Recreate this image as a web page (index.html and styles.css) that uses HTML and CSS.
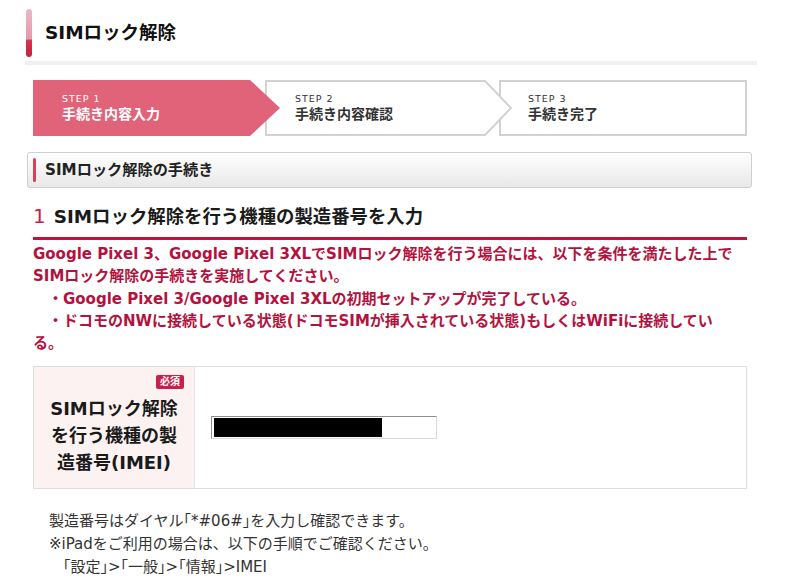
FILE: index.html
```html
<!DOCTYPE html>
<html lang="ja">
<head>
<meta charset="utf-8">
<title>SIMロック解除</title>
<link rel="stylesheet" href="styles.css">
</head>
<body>
<div class="page">
  <header class="hdr">
    <div class="hdr-title"><span class="hdr-bar"></span><h1>SIMロック解除</h1></div>
    <div class="hdr-line"></div>
  </header>
  <main class="main">
    <ol class="steps">
      <li class="step step-cur">
        <span class="step-no">STEP 1</span>
        <span class="step-name">手続き内容入力</span>
      </li>
      <li class="step step-mid">
        <svg class="step-bg" viewBox="0 0 247 56" width="247" height="56" aria-hidden="true"><polygon points="1,1 220,1 246,28 220,55 1,55" fill="#fff" stroke="#d2d2d2" stroke-width="2"/></svg>
        <span class="step-no">STEP 2</span>
        <span class="step-name">手続き内容確認</span>
      </li>
      <li class="step step-last">
        <span class="step-no">STEP 3</span>
        <span class="step-name">手続き完了</span>
      </li>
    </ol>

    <div class="sec"><span class="sec-bar"></span><h2>SIMロック解除の手続き</h2></div>

    <h3 class="ttl"><span class="ttl-num">1</span>SIMロック解除を行う機種の製造番号を入力</h3>

    <p class="warn">Google Pixel 3、Google Pixel 3XLでSIMロック解除を行う場合には、以下を条件を満たした上で<br>SIMロック解除の手続きを実施してください。<br>　・Google Pixel 3/Google Pixel 3XLの初期セットアップが完了している。<br>　・ドコモのNWに接続している状態(ドコモSIMが挿入されている状態)もしくはWiFiに接続してい<br>る。</p>

    <div class="form">
      <div class="form-th">
        <span class="req">必須</span>
        <div class="form-label">SIMロック解除<br>を行う機種の製<br>造番号(IMEI)</div>
      </div>
      <div class="form-td">
        <div class="input"><span class="redact"></span></div>
      </div>
    </div>

    <div class="notes">
      <p>製造番号はダイヤル｢*#06#｣を入力し確認できます。</p>
      <p>※iPadをご利用の場合は、以下の手順でご確認ください。</p>
      <p class="notes-path">｢設定｣&gt;｢一般｣&gt;｢情報｣&gt;IMEI</p>
    </div>
  </main>
</div>
</body>
</html>
```

FILE: styles.css
```css
* { box-sizing: border-box; }
html, body { margin: 0; padding: 0; background: #fff; }
body {
  font-family: "DejaVu Sans", "Noto Sans CJK JP", sans-serif;
  color: #222;
}
.page { width: 800px; }

/* header */
.hdr { margin-left: 25px; width: 732px; padding-top: 9px; }
.hdr-title { display: flex; align-items: center; height: 48px; }
.hdr-bar {
  width: 6px; height: 48px; margin-left: 1px; margin-right: 13px;
  border-radius: 3px;
  background: linear-gradient(#ecb8c4 0%, #e39aab 62%, #d4324f 66%, #c9203f 100%);
}
.hdr-title h1 { margin: 0; font-size: 18.5px; line-height: 24px; font-weight: bold; color: #111; }
.hdr-line { margin-top: 4px; height: 4px; background: #f0f0f0; }

.main { margin-left: 33px; width: 714px; }

/* steps */
.steps { list-style: none; margin: 15px 0 0; padding: 0; display: flex; height: 56px; }
.step {
  position: relative; height: 56px;
  display: flex; flex-direction: column; justify-content: center;
}
.step-no, .step-name { position: relative; display: block; }
.step-no { font-size: 9.5px; line-height: 12px; letter-spacing: 1px; }
.step-name { font-size: 14px; line-height: 18px; font-weight: bold; }
.step-cur {
  width: 247px; padding-left: 29px; z-index: 3;
  background: #e0637a; color: #fff;
  clip-path: polygon(0 0, 217px 0, 100% 50%, 217px 100%, 0 100%);
}
.step-mid { width: 247px; margin-left: -15px; padding-left: 30px; z-index: 2; color: #333; }
.step-bg { position: absolute; left: 0; top: 0; }
.step-last {
  width: 248px; margin-left: -13px; padding-left: 27px; z-index: 1; color: #333;
  border: 2px solid #d2d2d2; background: #fff;
}

/* section box */
.sec {
  margin: 16px 0 0 -6px; width: 725px; height: 36px;
  border: 1px solid #cfcfcf; border-radius: 3px;
  background: linear-gradient(#ffffff, #e8e8e8);
  display: flex; align-items: center;
}
.sec-bar { width: 3px; height: 24px; margin-left: 5px; margin-right: 9px; background: #d8405e; border-radius: 2px; }
.sec h2 { margin: 0; font-size: 15.2px; line-height: 20px; font-weight: bold; color: #222; }

/* title */
.ttl {
  margin: 14px 0 0; padding-bottom: 6px;
  font-size: 18.4px; line-height: 28px; font-weight: bold; color: #1a1a1a;
  border-bottom: 3px solid #b8163e;
}
.ttl-num { color: #d11c42; font-size: 20px; font-weight: normal; margin-right: 8px; }

/* warning */
.warn { margin: 3px 0 0; font-size: 15px; line-height: 22.3px; font-weight: bold; color: #b3123e; }

/* form */
.form {
  margin-top: 12px; display: flex; height: 123px;
  border: 1px solid #dedede;
}
.form-th {
  width: 161px; background: #fdf2f2; border-right: 1px solid #e6e6e6;
  display: flex; flex-direction: column; align-items: center;
  padding: 8px 10px 0 0;
}
.req {
  align-self: flex-end;
  background: #c8204a; color: #fff; border-radius: 2px;
  font-size: 10px; line-height: 14px; font-weight: bold; padding: 0 4px;
}
.form-label {
  margin-top: 6px; padding-left: 10px;
  text-align: center; font-size: 18px; line-height: 27px; font-weight: bold; color: #1a1a1a;
}
.form-td { flex: 1; display: flex; align-items: center; padding-left: 16px; }
.input {
  width: 226px; height: 23px; padding: 1px 2px;
  border: 1px solid; border-color: #8e8e8e #dadada #dadada #8e8e8e;
  background: #fff;
}
.redact { display: block; width: 168px; height: 100%; background: #000; }

/* notes */
.notes { margin-top: 21px; padding-left: 16px; font-size: 15px; line-height: 23px; color: #333; }
.notes p { margin: 0; }
.notes-path { padding-left: 14px; }
```
